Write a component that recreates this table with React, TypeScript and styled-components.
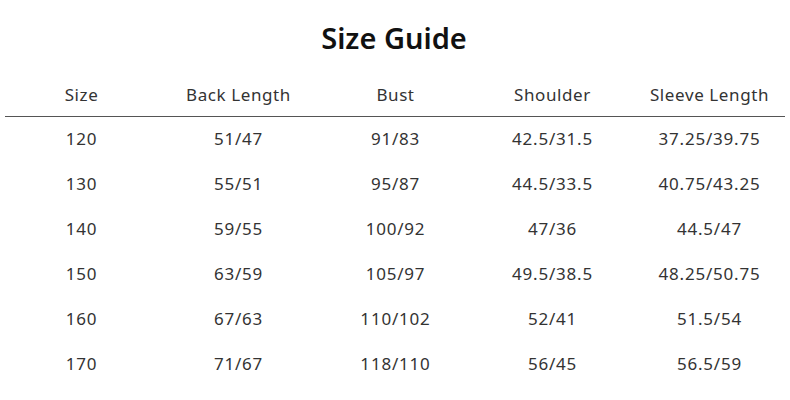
import React from "react";
import styled, { createGlobalStyle } from "styled-components";

const GlobalStyle = createGlobalStyle`
  html, body {
    margin: 0;
    padding: 0;
    background: #ffffff;
  }
  body {
    font-family: "Noto Sans", "Open Sans", "DejaVu Sans", sans-serif;
    color: #333333;
  }
`;

const Page = styled.div`
  width: 790px;
  height: 400px;
  box-sizing: border-box;
  padding: 18px 5px 0 3px;
  display: flex;
  flex-direction: column;
  align-items: stretch;
`;

const Title = styled.h1`
  margin: 0;
  text-align: center;
  font-size: 29px;
  font-weight: 600;
  line-height: 40px;
  color: #111111;
`;

const Table = styled.div`
  margin-top: 18px;
  display: flex;
  flex-direction: column;
`;

const HeaderRow = styled.div`
  display: grid;
  grid-template-columns: repeat(5, 157px);
  height: 41px;
  box-sizing: border-box;
  padding-top: 7px;
  align-items: start;
  margin-left: 2px;
  border-bottom: 1.5px solid #555555;
`;

const Row = styled.div`
  display: grid;
  grid-template-columns: repeat(5, 157px);
  height: 45px;
  box-sizing: border-box;
  padding-bottom: 1px;
  align-items: center;
`;

const Cell = styled.div<{ $spacing?: number }>`
  text-align: center;
  font-size: 17px;
  line-height: 24px;
  letter-spacing: ${(p) => p.$spacing ?? 0.6}px;
  color: #333333;
  white-space: nowrap;
`;

const HeaderCell = styled(Cell)`
  margin-left: -4px;
`;

const headers = ["Size", "Back Length", "Bust", "Shoulder", "Sleeve Length"];

const rows = [
  ["120", "51/47", "91/83", "42.5/31.5", "37.25/39.75"],
  ["130", "55/51", "95/87", "44.5/33.5", "40.75/43.25"],
  ["140", "59/55", "100/92", "47/36", "44.5/47"],
  ["150", "63/59", "105/97", "49.5/38.5", "48.25/50.75"],
  ["160", "67/63", "110/102", "52/41", "51.5/54"],
  ["170", "71/67", "118/110", "56/45", "56.5/59"],
];

const App = () => {
  return (
    <>
      <GlobalStyle />
      <Page>
        <Title>Size Guide</Title>
        <Table>
          <HeaderRow>
            {headers.map((h) => (
              <HeaderCell key={h}>{h}</HeaderCell>
            ))}
          </HeaderRow>
          {rows.map((r) => (
            <Row key={r[0]}>
              {r.map((v, i) => (
                <Cell key={i} $spacing={0.8}>
                  {v}
                </Cell>
              ))}
            </Row>
          ))}
        </Table>
      </Page>
    </>
  );
};

export default App;
